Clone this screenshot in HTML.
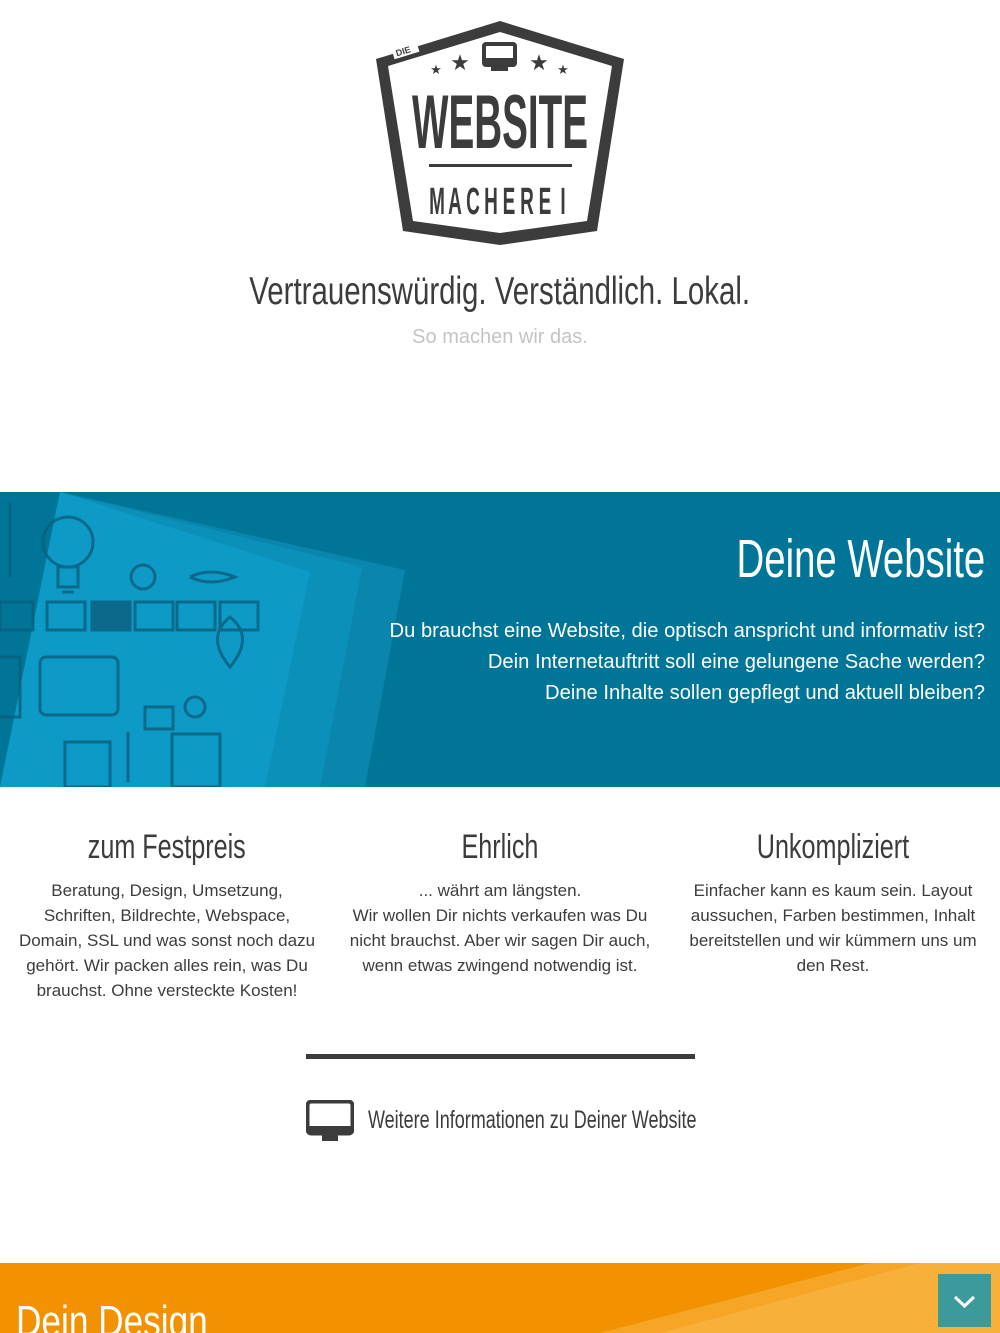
<!DOCTYPE html>
<html><head><meta charset="utf-8">
<style>
*{margin:0;padding:0;box-sizing:border-box}
body{width:1000px;height:1333px;overflow:hidden;background:#fff;font-family:"Liberation Sans",sans-serif;color:#3c3c3c;position:relative}
.abs{position:absolute}
.sq{display:inline-block;transform:scaleX(0.74);white-space:nowrap}
h1{position:absolute;top:270px;left:0;width:1000px;text-align:center;font-weight:400;font-size:39px;color:#3c3c3c}
h1 .sq{transform-origin:50% 50%;transform:scaleX(0.755)}
.sub{position:absolute;top:326px;width:1000px;text-align:center;font-size:20px;color:#c4c4c4;font-weight:300}
.banner{position:absolute;top:492px;left:0;width:1000px;height:295px;background:#007597;overflow:hidden}
.bt{position:absolute;right:15px;text-align:right;color:#fff}
.col{position:absolute;top:828px;width:306px;text-align:center}
.col h3{font-weight:400;font-size:34px;color:#3c3c3c;margin-bottom:11px}
.col h3 .sq{transform-origin:50% 50%}
.col p{font-size:17px;line-height:25px;color:#3c3c3c}
</style></head><body>
<svg class="abs" style="left:374px;top:18px" width="252" height="228" viewBox="0 0 252 228">
<path d="M126 3 L250 41 L223 213 L126 227 L29 213 L2 41 Z M126 14 L238 48 L213 203 L126 215 L39 203 L14 48 Z" fill="#3c3c3c" fill-rule="evenodd"/>
<rect x="18" y="24" width="26" height="14" fill="#fff" transform="rotate(-17 30 31)"/>
<text x="21" y="36" font-size="9" font-weight="700" fill="#3c3c3c" transform="rotate(-17 30 31)">DIE</text>
<rect x="110" y="26" width="31" height="21" rx="2" fill="none" stroke="#3c3c3c" stroke-width="4"/>
<rect x="110" y="40" width="31" height="7" fill="#3c3c3c"/>
<rect x="117" y="49" width="17" height="4" fill="#3c3c3c"/>
<text x="86" y="52" font-size="22" fill="#3c3c3c" text-anchor="middle">★</text>
<text x="165" y="52" font-size="22" fill="#3c3c3c" text-anchor="middle">★</text>
<text x="62" y="56" font-size="13" fill="#3c3c3c" text-anchor="middle">★</text>
<text x="189" y="56" font-size="13" fill="#3c3c3c" text-anchor="middle">★</text>
<text x="126" y="130" font-size="76" font-weight="700" fill="#3c3c3c" text-anchor="middle" textLength="176" lengthAdjust="spacingAndGlyphs">WEBSITE</text>
<rect x="55" y="146" width="143" height="3" fill="#3c3c3c"/>
<g transform="scale(0.5,1)" font-size="38" font-weight="700" fill="#3c3c3c" text-anchor="middle">
<text y="196"><tspan x="126">M</tspan><tspan x="162">A</tspan><tspan x="198">C</tspan><tspan x="234">H</tspan><tspan x="270">E</tspan><tspan x="306">R</tspan><tspan x="342">E</tspan><tspan x="378">I</tspan></text>
</g>
</svg>
<h1><span class="sq">Vertrauenswürdig. Verständlich. Lokal.</span></h1>
<div class="sub">So machen wir das.</div>

<div class="banner">
<svg class="abs" style="left:0;top:0" width="420" height="295">
<polygon points="60,0 405,78 365,295 0,295" fill="#0a86ae"/>
<polygon points="60,0 362,75 320,295 0,295" fill="#0b90ba"/>
<polygon points="60,0 310,80 265,295 0,295" fill="#0d9ac6"/>
<g fill="none" stroke="#0b5f7e" stroke-width="3" opacity=".8">
<circle cx="68" cy="50" r="25"/><path d="M58 75 h20 v20 h-20z M62 100 h12"/>
<rect x="47" y="110" width="38" height="28"/><rect x="92" y="110" width="38" height="28" fill="#0b5f7e"/>
<rect x="135" y="110" width="38" height="28"/><rect x="177" y="110" width="38" height="28"/><rect x="220" y="110" width="38" height="28"/>
<rect x="40" y="165" width="78" height="58" rx="6"/><circle cx="143" cy="85" r="12"/><path d="M190 85 q20 -10 45 0 q-25 10 -45 0"/>
<path d="M230 175 q-25 -30 0 -50 q25 20 0 50z"/><rect x="145" y="215" width="28" height="22"/><circle cx="195" cy="215" r="10"/>
<rect x="65" y="250" width="45" height="45"/><rect x="172" y="242" width="48" height="53"/><rect x="0" y="110" width="33" height="28"/>
<path d="M10 10 v75 M128 240 v50 M0 165 h20 v60 h-20"/>
</g>
</svg>
<div class="bt" style="top:36px;font-size:54px"><span class="sq" style="transform:scaleX(0.71);transform-origin:100% 50%">Deine Website</span></div>
<div class="bt" style="top:124px;font-size:20.2px;line-height:31px;font-weight:300">Du brauchst eine Website, die optisch anspricht und informativ ist?<br>Dein Internetauftritt soll eine gelungene Sache werden?<br>Deine Inhalte sollen gepflegt und aktuell bleiben?</div>
</div>

<div class="col" style="left:14px"><h3><span class="sq">zum Festpreis</span></h3><p>Beratung, Design, Umsetzung, Schriften, Bildrechte, Webspace, Domain, SSL und was sonst noch dazu gehört. Wir packen alles rein, was Du brauchst. Ohne versteckte Kosten!</p></div>
<div class="col" style="left:347px"><h3><span class="sq">Ehrlich</span></h3><p>... währt am längsten.<br>Wir wollen Dir nichts verkaufen was Du nicht brauchst. Aber wir sagen Dir auch, wenn etwas zwingend notwendig ist.</p></div>
<div class="col" style="left:680px"><h3><span class="sq">Unkompliziert</span></h3><p>Einfacher kann es kaum sein. Layout aussuchen, Farben bestimmen, Inhalt bereitstellen und wir kümmern uns um den Rest.</p></div>

<div class="abs" style="left:306px;top:1054px;width:389px;height:5px;background:#3c3c3c"></div>
<svg class="abs" style="left:306px;top:1100px" width="48" height="42" viewBox="0 0 48 42">
<rect x="1.5" y="1.5" width="45" height="32" rx="4" fill="none" stroke="#3c3c3c" stroke-width="4"/>
<rect x="1" y="26" width="46" height="9" rx="3" fill="#3c3c3c"/>
<rect x="16" y="34" width="16" height="7" fill="#3c3c3c"/>
</svg>
<div class="abs" style="left:368px;top:1106px;font-size:25px;color:#3c3c3c"><span class="sq" style="transform:scaleX(0.72);transform-origin:0 50%">Weitere Informationen zu Deiner Website</span></div>

<div class="abs" style="left:0;top:1263px;width:1000px;height:70px;background:#f39200;overflow:hidden">
<svg class="abs" style="left:0;top:0" width="1000" height="70"><polygon points="870,0 1000,0 1000,70 600,70" fill="#f6a526"/><polygon points="920,0 1000,0 1000,70 660,70" fill="#f8b03a"/></svg>
<div class="abs" style="left:16px;top:34px;font-size:44px;color:#fff"><span class="sq" style="transform:scaleX(0.8);transform-origin:0 50%">Dein Design</span></div>
</div>
<div class="abs" style="left:938px;top:1274px;width:53px;height:53px;background:#3d9a9b"></div>
<svg class="abs" style="left:938px;top:1274px" width="53" height="53"><path d="M17 23 L26.5 32 L36 23" fill="none" stroke="#fff" stroke-width="3"/></svg>
</body></html>
